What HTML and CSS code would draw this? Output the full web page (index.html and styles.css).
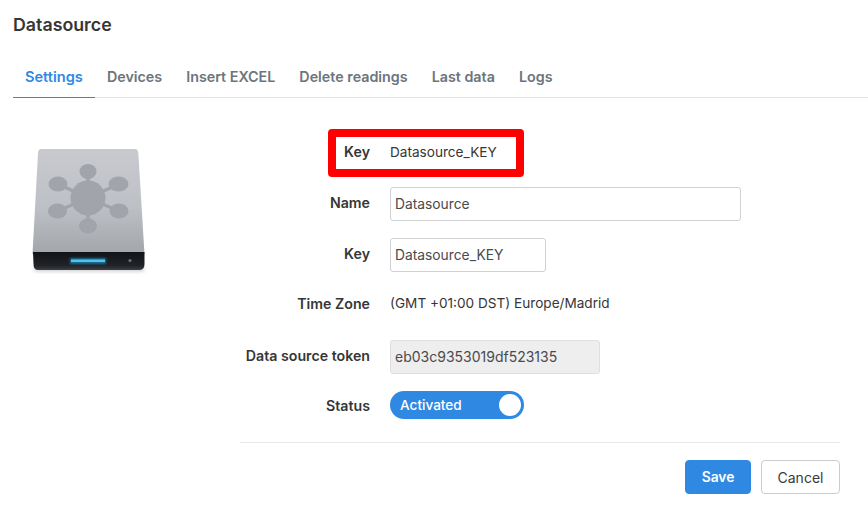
FILE: index.html
```html
<!DOCTYPE html>
<html lang="en">
<head>
<meta charset="utf-8">
<title>Datasource</title>
<link rel="stylesheet" href="styles.css">
</head>
<body>
<div class="page">
  <h1 class="title">Datasource</h1>
  <nav class="tabs">
    <a class="tab active">Settings</a>
    <a class="tab">Devices</a>
    <a class="tab">Insert EXCEL</a>
    <a class="tab">Delete readings</a>
    <a class="tab">Last data</a>
    <a class="tab">Logs</a>
  </nav>
  <div class="content">
    <div class="drive">
      <svg width="170" height="160" viewBox="0 0 170 160" xmlns="http://www.w3.org/2000/svg">
        <defs>
          <linearGradient id="body" x1="0" y1="0" x2="0" y2="1">
            <stop offset="0" stop-color="#c8cacf"/>
            <stop offset="0.55" stop-color="#bdc0c5"/>
            <stop offset="1" stop-color="#a2a5aa"/>
          </linearGradient>
          <linearGradient id="base" x1="0" y1="0" x2="0" y2="1">
            <stop offset="0" stop-color="#111317"/>
            <stop offset="0.75" stop-color="#202327"/>
            <stop offset="1" stop-color="#3c3f43"/>
          </linearGradient>
          <filter id="soft" x="-20%" y="-50%" width="140%" height="200%">
            <feGaussianBlur stdDeviation="2"/>
          </filter>
          <filter id="glow" x="-30%" y="-100%" width="160%" height="300%">
            <feGaussianBlur stdDeviation="1"/>
          </filter>
          <filter id="tiny" x="-10%" y="-10%" width="120%" height="120%">
            <feGaussianBlur stdDeviation="0.5"/>
          </filter>
        </defs>
        <path d="M36 136 H142 L145 141 H34 Z" fill="#8d8f92" opacity=".5" filter="url(#soft)"/>
        <path d="M41 19 H135 Q138 19 138.300 23 L144.500 124 H32.500 L38 23 Q38.300 19 41 19 Z" fill="url(#body)"/>
        <path d="M33 122 H144.500 V134 Q144.500 140 139 140 H38 Q33.500 140 33.500 134 Z" fill="url(#base)"/>
        <g fill="#a1a4aa" stroke="#a1a4aa" filter="url(#tiny)">
          <path d="M88 68 V42 M88 68 L119 54 M88 68 L119 81 M88 68 V96 M88 68 L58 54 M88 68 L58 81" stroke-width="3.500" fill="none"/>
          <circle cx="88" cy="68" r="17.500" stroke="none"/>
          <ellipse cx="88" cy="41.500" rx="8.500" ry="7.500" stroke="none"/>
          <ellipse cx="118.500" cy="54" rx="10" ry="7.500" stroke="none"/>
          <ellipse cx="119" cy="81" rx="9.500" ry="7.500" stroke="none"/>
          <ellipse cx="88" cy="96" rx="9" ry="7.500" stroke="none"/>
          <ellipse cx="58" cy="54" rx="9.500" ry="7.500" stroke="none"/>
          <ellipse cx="57.500" cy="81" rx="9.500" ry="7.500" stroke="none"/>
        </g>
        <rect x="70" y="128" width="36" height="6" fill="#1c8fc4" opacity=".7" filter="url(#glow)"/>
        <rect x="71" y="129.500" width="34" height="2.500" fill="#4cc4ee"/>
        <circle cx="130" cy="130.500" r="1.600" fill="#6c6f73"/>
      </svg>
    </div>
    <form class="form">
      <div class="row highlight">
        <span class="label">Key</span>
        <span class="value">Datasource_KEY</span>
      </div>
      <div class="row row-name">
        <span class="label">Name</span>
        <input class="input wide" value="Datasource">
      </div>
      <div class="row row-key">
        <span class="label">Key</span>
        <input class="input medium" value="Datasource_KEY">
      </div>
      <div class="row row-zone">
        <span class="label">Time Zone</span>
        <span class="value">(GMT +01:00 DST) Europe/Madrid</span>
      </div>
      <div class="row row-token">
        <span class="label">Data source token</span>
        <input class="input token" value="eb03c9353019df523135" disabled>
      </div>
      <div class="row row-status">
        <span class="label">Status</span>
        <span class="toggle">Activated<span class="knob"></span></span>
      </div>
      <div class="actions">
        <button type="button" class="btn primary">Save</button>
        <button type="button" class="btn">Cancel</button>
      </div>
    </form>
  </div>
</div>
</body>
</html>
```

FILE: styles.css
```css
* { box-sizing: border-box; }
html, body { margin: 0; padding: 0; background: #fff; }
body {
  width: 868px;
  height: 514px;
  overflow: hidden;
  font-family: Inter, "Liberation Sans", sans-serif;
  color: #3a3a3c;
  font-size: 14px;
}
.page { padding: 15px 0 0 13px; }
.title {
  margin: 0;
  font-size: 17.8px;
  line-height: 20px;
  font-weight: 600;
  color: #363636;
}
.tabs {
  display: flex;
  margin-top: 23px;
  height: 40px;
  border-bottom: 1px solid #e4e4e4;
}
.tab {
  height: 40px;
  padding: 10px 12px 0;
  font-size: 14.3px;
  line-height: 18px;
  font-weight: 600;
  color: #6c757d;
}
.tab.active {
  font-size: 14.6px;
  color: #2f89e3;
  border-bottom: 1px solid #2f89e3;
}
.content { display: flex; }
.drive { width: 240px; margin-left: -13px; margin-top: 32px; flex: none; }
.drive svg { display: block; }
.form { width: 600px; display: flex; flex-direction: column; padding-top: 31px; }
.row { display: flex; align-items: center; }
.label {
  width: 130px;
  padding-bottom: 4px;
  text-align: right;
  font-weight: 600;
  font-size: 14.2px;
  color: #363636;
  flex: none;
}
.value { margin-left: 20px; padding-bottom: 2px; color: #363636; font-size: 13.6px; }
.highlight {
  width: 196px;
  height: 48px;
  margin-left: 88px;
  border: 8px solid #ff0000;
  border-radius: 4px;
}
.highlight .label { width: 34px; }
.input {
  margin-left: 20px;
  height: 34px;
  padding: 0 4px;
  font: 13.8px Inter, "Liberation Sans", sans-serif;
  color: #4a4a4c;
  background: #fff;
  border: 1px solid #cfd1d4;
  border-radius: 3px;
  outline: none;
}
.wide { width: 351px; }
.medium { width: 156px; }
.token { width: 210px; padding-bottom: 2px; font-size: 14px; background: #eeeeee; border-color: #dfdfdf; color: #4a4a4c; opacity: 1; }
.row-name { margin-top: 10px; }
.row-key { margin-top: 17px; }
.row-zone { margin-top: 15px; height: 34px; }
.row-zone .label { padding-bottom: 2px; }
.row-token { margin-top: 19px; }
.row-status { margin-top: 17px; }
.row-status .label { padding-bottom: 0; }
.toggle {
  position: relative;
  margin-left: 20px;
  width: 134px;
  height: 28px;
  padding: 0 0 0 10px;
  border-radius: 14px;
  background: #2f89e3;
  color: #fff;
  font-size: 13.6px;
  line-height: 28px;
  font-weight: 500;
}
.knob {
  position: absolute;
  top: 3px;
  right: 3px;
  width: 22px;
  height: 22px;
  border-radius: 50%;
  background: #fff;
}
.actions {
  display: flex;
  justify-content: flex-end;
  gap: 10px;
  margin-top: 23px;
  padding-top: 17px;
  border-top: 1px solid #e8e8e8;
}
.btn {
  height: 34px;
  width: 79px;
  font: 14px Inter, "Liberation Sans", sans-serif;
  color: #3a3a3c;
  background: #fff;
  border: 1px solid #cccccc;
  border-radius: 4px;
}
.btn.primary {
  width: 66px;
  font-size: 13.8px;
  font-weight: 600;
  color: #fff;
  background: #2f89e3;
  border-color: #2f89e3;
}
```
